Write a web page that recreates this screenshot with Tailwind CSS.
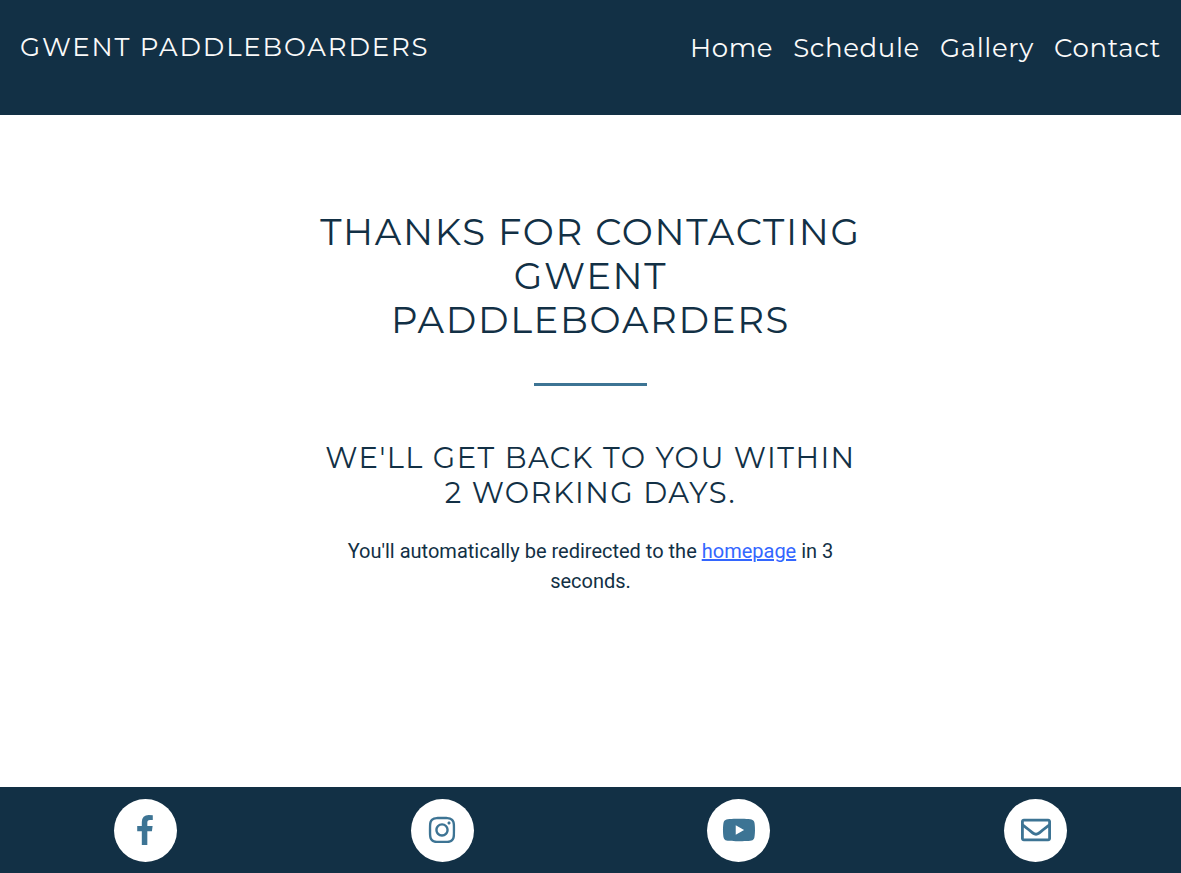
<!DOCTYPE html>
<html lang="en">
<head>
<meta charset="utf-8">
<meta name="viewport" content="width=device-width, initial-scale=1">
<title>Gwent Paddleboarders</title>
<script src="https://cdn.jsdelivr.net/npm/@tailwindcss/browser@4"></script>
</head>
<body class="flex min-h-screen flex-col bg-white font-[Montserrat,Inter,sans-serif] text-[#123045]">
<header class="flex flex-wrap items-start justify-between bg-[#123045] px-5 pt-7 pb-[47px] text-[#fafafa]">
  <a href="#" class="text-[26px] leading-[38px] tracking-[0.07em] uppercase">Gwent Paddleboarders</a>
  <nav class="flex flex-wrap gap-5 text-[26px] leading-10 tracking-wide">
    <a href="#">Home</a>
    <a href="#">Schedule</a>
    <a href="#">Gallery</a>
    <a href="#">Contact</a>
  </nav>
</header>
<main class="mx-auto flex w-full max-w-[566px] grow flex-col items-center pt-[95px] text-center">
  <h1 class="text-[37px] leading-[44px] tracking-[0.045em] uppercase">Thanks for contacting<br>Gwent<br>Paddleboarders</h1>
  <hr class="mt-[41px] h-[3px] w-1/5 border-0 bg-[#3d7494]">
  <h2 class="mt-[54px] text-[29px] leading-[35px] tracking-wider uppercase">We'll get back to you within<br>2 working days.</h2>
  <p class="mt-[26px] font-[Roboto,sans-serif] text-xl leading-[30px]">You'll automatically be redirected to the <a href="#" class="text-[#3366ff] underline">homepage</a> in 3<br>seconds.</p>
</main>
<footer class="overflow-hidden bg-[#123045] pt-3 pb-[11px]">
  <ul class="-mx-[3px] grid grid-cols-4 justify-items-center text-[#3d7494]">
    <li><a href="#" aria-label="Facebook" class="flex size-[63px] items-center justify-center rounded-full bg-white pb-[2px]">
      <svg class="h-[30px] w-4" viewBox="479 0 864 1664" fill="currentColor"><path d="M1343 12v264h-157q-86 0-116 36t-30 108v189h293l-39 296h-254v759H734V905H479V609h255V391q0-186 104-288.500T1115 0q147 0 228 12z"/></svg></a></li>
    <li><a href="#" aria-label="Instagram" class="flex size-[63px] items-center justify-center rounded-full bg-white pb-[2px]">
      <svg class="h-[30px] w-7" viewBox="0 0 448 512" fill="currentColor"><path d="M224.100 141c-63.600 0-114.900 51.300-114.900 114.900s51.300 114.900 114.900 114.900S339 319.500 339 255.900 287.700 141 224.100 141zm0 189.600c-41.100 0-74.700-33.500-74.700-74.700s33.500-74.700 74.700-74.700 74.700 33.500 74.700 74.700-33.600 74.700-74.700 74.700zm146.400-194.300c0 14.900-12 26.800-26.800 26.800-14.900 0-26.800-12-26.800-26.800s12-26.800 26.800-26.800 26.800 12 26.800 26.800zm76.100 27.200c-1.700-35.900-9.900-67.700-36.200-93.900-26.200-26.200-58-34.400-93.900-36.200-37-2.100-147.900-2.100-184.900 0-35.800 1.700-67.600 9.900-93.900 36.100s-34.400 58-36.200 93.900c-2.100 37-2.100 147.900 0 184.900 1.700 35.900 9.900 67.700 36.200 93.900s58 34.400 93.900 36.200c37 2.100 147.900 2.100 184.900 0 35.900-1.700 67.700-9.900 93.900-36.200 26.200-26.200 34.400-58 36.200-93.900 2.100-37 2.100-147.800 0-184.800zM398.800 388c-7.800 19.600-22.900 34.700-42.600 42.600-29.500 11.700-99.500 9-132.100 9s-102.700 2.600-132.100-9c-19.600-7.800-34.700-22.900-42.600-42.600-11.700-29.500-9-99.500-9-132.100s-2.600-102.700 9-132.100c7.800-19.600 22.900-34.700 42.600-42.600 29.500-11.700 99.500-9 132.100-9s102.700-2.600 132.100 9c19.600 7.800 34.700 22.900 42.600 42.600 11.700 29.500 9 99.500 9 132.100s2.700 102.700-9 132.100z"/></svg></a></li>
    <li><a href="#" aria-label="YouTube" class="flex size-[63px] items-center justify-center rounded-full bg-white pb-[2px]">
      <svg class="h-[30px] w-[34px]" viewBox="0 0 576 512" fill="currentColor"><path d="M549.655 124.083c-6.281-23.650-24.787-42.276-48.284-48.597C458.781 64 288 64 288 64S117.220 64 74.629 75.486c-23.497 6.322-42.003 24.947-48.284 48.597-11.412 42.867-11.412 132.305-11.412 132.305s0 89.438 11.412 132.305c6.281 23.650 24.787 41.500 48.284 47.821C117.220 448 288 448 288 448s170.780 0 213.371-11.486c23.497-6.321 42.003-24.171 48.284-47.821 11.412-42.867 11.412-132.305 11.412-132.305s0-89.438-11.412-132.305zm-317.510 213.508V175.185l142.739 81.205-142.739 81.201z"/></svg></a></li>
    <li><a href="#" aria-label="Email" class="flex size-[63px] items-center justify-center rounded-full bg-white pb-[2px]">
      <svg class="size-[30px]" viewBox="0 0 512 512" fill="currentColor"><path d="M464 64H48C21.490 64 0 85.490 0 112v288c0 26.510 21.490 48 48 48h416c26.510 0 48-21.490 48-48V112c0-26.510-21.490-48-48-48zm0 48v40.805c-22.422 18.259-58.168 46.651-134.587 106.490-16.841 13.247-50.201 45.072-73.413 44.701-23.208.375-56.579-31.459-73.413-44.701C106.180 199.465 70.425 171.067 48 152.805V112h416zM48 400V214.398c22.914 18.251 55.409 43.862 104.938 82.646 21.857 17.205 60.134 55.186 103.062 54.955 42.717.231 80.509-37.199 103.053-54.947 49.528-38.783 82.032-64.401 104.947-82.653V400H48z"/></svg></a></li>
  </ul>
</footer>
</body>
</html>
